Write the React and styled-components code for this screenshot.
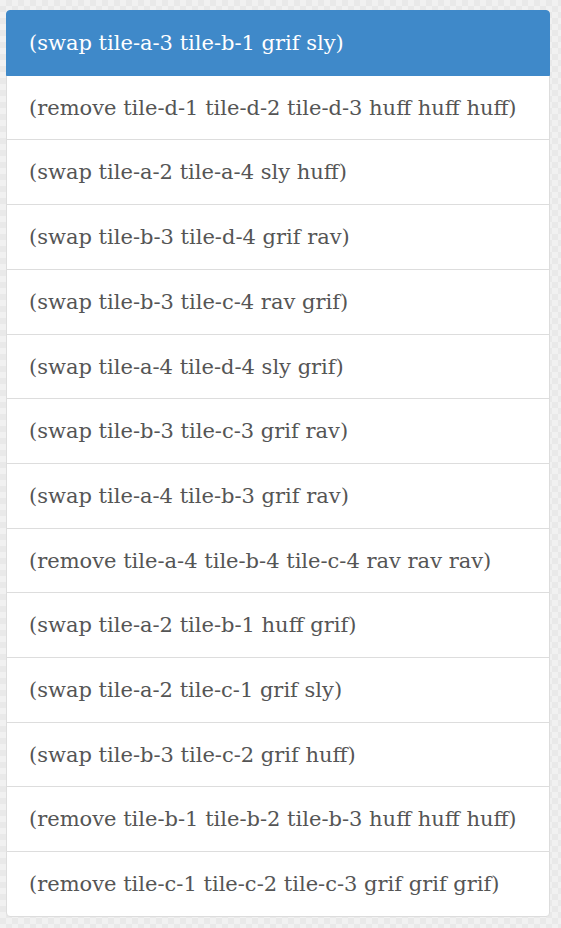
import React from 'react';
import styled, { createGlobalStyle } from 'styled-components';

const GlobalStyle = createGlobalStyle`
  html, body {
    margin: 0;
    padding: 0;
    min-height: 100%;
  }
  body {
    background-color: #f1f1f1;
    background-image:
      linear-gradient(45deg, #e9e9e9 25%, transparent 25%, transparent 75%, #e9e9e9 75%),
      linear-gradient(45deg, #e9e9e9 25%, transparent 25%, transparent 75%, #e9e9e9 75%);
    background-size: 12px 12px;
    background-position: 0 0, 6px 6px;
    font-family: "DejaVu Serif", "Liberation Serif", serif;
  }
`;

const Page = styled.div`
  padding: 10px 11px 11px 6px;
  min-height: 928px;
  box-sizing: border-box;
`;

const ListGroup = styled.ul`
  list-style: none;
  margin: 0;
  padding: 0;
  display: flex;
  flex-direction: column;
`;

const Item = styled.li`
  position: relative;
  margin-bottom: -1px;
  padding: 21px 22px 19px 22px;
  font-size: 21px;
  line-height: 23.7px;
  font-variant-numeric: oldstyle-nums;
  color: ${(p) => (p.$active ? '#fff' : '#555')};
  background: ${(p) => (p.$active ? '#3f89c9' : '#fff')};
  border: 1px solid ${(p) => (p.$active ? '#3f89c9' : '#ddd')};
  z-index: ${(p) => (p.$active ? 2 : 1)};
  white-space: nowrap;

  &:first-child {
    border-top-left-radius: 4px;
    border-top-right-radius: 4px;
  }
  &:last-child {
    margin-bottom: 0;
    border-bottom-left-radius: 4px;
    border-bottom-right-radius: 4px;
  }
`;

const actions = [
  '(swap tile-a-3 tile-b-1 grif sly)',
  '(remove tile-d-1 tile-d-2 tile-d-3 huff huff huff)',
  '(swap tile-a-2 tile-a-4 sly huff)',
  '(swap tile-b-3 tile-d-4 grif rav)',
  '(swap tile-b-3 tile-c-4 rav grif)',
  '(swap tile-a-4 tile-d-4 sly grif)',
  '(swap tile-b-3 tile-c-3 grif rav)',
  '(swap tile-a-4 tile-b-3 grif rav)',
  '(remove tile-a-4 tile-b-4 tile-c-4 rav rav rav)',
  '(swap tile-a-2 tile-b-1 huff grif)',
  '(swap tile-a-2 tile-c-1 grif sly)',
  '(swap tile-b-3 tile-c-2 grif huff)',
  '(remove tile-b-1 tile-b-2 tile-b-3 huff huff huff)',
  '(remove tile-c-1 tile-c-2 tile-c-3 grif grif grif)',
];

export default function App() {
  return (
    <>
      <GlobalStyle />
      <Page>
        <ListGroup>
          {actions.map((a, i) => (
            <Item key={i} $active={i === 0}>{a}</Item>
          ))}
        </ListGroup>
      </Page>
    </>
  );
}
